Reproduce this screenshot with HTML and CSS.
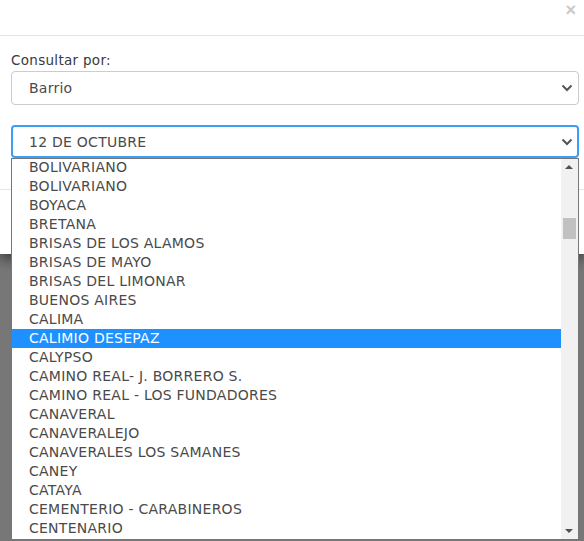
FILE: index.html
```html
<!DOCTYPE html>
<html lang="es">
<head>
<meta charset="utf-8">
<link rel="stylesheet" href="styles.css">
</head>
<body>
<div class="modal">
  <div class="modal-header">
    <span class="close">×</span>
  </div>
  <div class="modal-body">
    <label class="label">Consultar por:</label>
    <div class="select">
      <span>Barrio</span>
      <svg class="chev" width="12" height="8" viewBox="0 0 12 8"><path d="M1.5 1.5 L6 6 L10.5 1.5" fill="none" stroke="#555" stroke-width="2"/></svg>
    </div>
    <div class="select-wrap">
      <div class="select focus">
        <span>12 DE OCTUBRE</span>
        <svg class="chev" width="12" height="8" viewBox="0 0 12 8"><path d="M1.5 1.5 L6 6 L10.5 1.5" fill="none" stroke="#555" stroke-width="2"/></svg>
      </div>
      <div class="dropdown">
        <ul class="options">
          <li>BOLIVARIANO</li>
          <li>BOLIVARIANO</li>
          <li>BOYACA</li>
          <li>BRETANA</li>
          <li>BRISAS DE LOS ALAMOS</li>
          <li>BRISAS DE MAYO</li>
          <li>BRISAS DEL LIMONAR</li>
          <li>BUENOS AIRES</li>
          <li>CALIMA</li>
          <li class="selected">CALIMIO DESEPAZ</li>
          <li>CALYPSO</li>
          <li>CAMINO REAL- J. BORRERO S.</li>
          <li>CAMINO REAL - LOS FUNDADORES</li>
          <li>CANAVERAL</li>
          <li>CANAVERALEJO</li>
          <li>CANAVERALES LOS SAMANES</li>
          <li>CANEY</li>
          <li>CATAYA</li>
          <li>CEMENTERIO - CARABINEROS</li>
          <li>CENTENARIO</li>
        </ul>
        <div class="scrollbar">
          <span class="arrow up"></span>
          <span class="thumb"></span>
          <span class="arrow down"></span>
        </div>
      </div>
    </div>
  </div>
  <div class="modal-footer"></div>
</div>
</body>
</html>
```

FILE: styles.css
```css
html, body {
  margin: 0;
  padding: 0;
}
body {
  width: 584px;
  height: 541px;
  background: #777777;
  font-family: "DejaVu Sans", sans-serif;
  overflow: hidden;
}
.modal {
  background: #ffffff;
  box-shadow: 0 4px 14px rgba(0, 0, 0, 0.6);
  height: 254px;
  display: flex;
  flex-direction: column;
}
.modal-header {
  box-sizing: border-box;
  height: 36px;
  border-bottom: 1px solid #e5e5e5;
  display: flex;
  justify-content: flex-end;
  align-items: flex-start;
}
.close {
  font-family: "Liberation Sans", sans-serif;
  font-weight: bold;
  font-size: 18px;
  line-height: 18px;
  color: #c9c9c9;
  margin: 1px 8px 0 0;
}
.modal-body {
  padding: 15px 5px 0 11px;
  display: flex;
  flex-direction: column;
}
.label {
  font-size: 13.5px;
  letter-spacing: 0.3px;
  color: #3a3a3a;
  line-height: 19px;
}
.select {
  box-sizing: border-box;
  height: 34px;
  border: 1px solid #cccccc;
  border-radius: 4px;
  display: flex;
  align-items: center;
  justify-content: space-between;
  padding: 0 5px 0 17px;
  font-size: 14px;
  letter-spacing: 0.25px;
  color: #4a4a4a;
  width: 568px;
  margin-top: 1px;
}
.select-wrap {
  position: relative;
  margin-top: 20px;
}
.select.focus {
  border: 2px solid #3d9ef5;
  padding-left: 16px;
  padding-right: 4px;
  height: 33px;
  margin-top: 0;
}
.chev {
  display: block;
}
.dropdown {
  position: absolute;
  left: 0;
  top: 33px;
  width: 568px;
  height: 382px;
  box-sizing: border-box;
  border: 1px solid #767676;
  background: #ffffff;
  overflow: hidden;
  z-index: 2;
}
.options {
  list-style: none;
  margin: -1px 0 0 0;
  padding: 0;
  width: 549px;
}
.options li {
  height: 19px;
  line-height: 19px;
  padding-left: 17px;
  font-size: 14px;
  letter-spacing: 0.25px;
  color: #4a4a4a;
  white-space: nowrap;
}
.options li.selected {
  background: #1e90ff;
  color: #ffffff;
}
.scrollbar {
  position: absolute;
  right: 0;
  top: 0;
  bottom: 0;
  width: 17px;
  background: #f1f1f1;
}
.arrow {
  position: absolute;
  left: 4px;
  width: 0;
  height: 0;
  border-left: 4px solid transparent;
  border-right: 4px solid transparent;
}
.arrow.up {
  top: 6px;
  border-bottom: 4px solid #505050;
}
.arrow.down {
  bottom: 6px;
  border-top: 4px solid #505050;
}
.thumb {
  position: absolute;
  left: 2px;
  width: 13px;
  top: 59px;
  height: 21px;
  background: #c1c1c1;
}
.modal-footer {
  margin-top: auto;
  border-top: 1px solid #e5e5e5;
  height: 64px;
}
```
